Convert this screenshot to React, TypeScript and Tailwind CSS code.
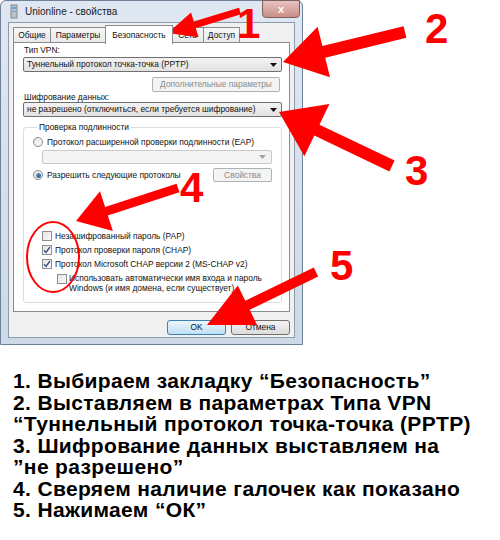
import React from 'react';

const ui = { fontFamily: '"Liberation Sans", Arial, sans-serif' };

type Pt = [number, number];

// builds a filled arrow polygon from the tail to the tip
function arrowPoints(tail: Pt, tip: Pt, headLen: number, headHalf: number, shaftHalf: number) {
  const dx = tail[0] - tip[0];
  const dy = tail[1] - tip[1];
  const len = Math.hypot(dx, dy);
  const ux = dx / len;
  const uy = dy / len;
  const px = -uy;
  const py = ux;
  const bx = tip[0] + ux * headLen;
  const by = tip[1] + uy * headLen;
  const pts: Pt[] = [
    tip,
    [bx + px * headHalf, by + py * headHalf],
    [bx + px * shaftHalf, by + py * shaftHalf],
    [tail[0] + px * shaftHalf, tail[1] + py * shaftHalf],
    [tail[0] - px * shaftHalf, tail[1] - py * shaftHalf],
    [bx - px * shaftHalf, by - py * shaftHalf],
    [bx - px * headHalf, by - py * headHalf],
  ];
  return pts.map((p) => p.map((n) => n.toFixed(1)).join(',')).join(' ');
}

const arrows = [
  { tail: [240, 11] as Pt, tip: [168, 33] as Pt, len: 28, head: 13, shaft: 3.5 },
  { tail: [405, 32] as Pt, tip: [283, 62] as Pt, len: 42, head: 26, shaft: 6 },
  { tail: [392, 166] as Pt, tip: [279, 112] as Pt, len: 42, head: 29, shaft: 6 },
  { tail: [178, 188] as Pt, tip: [76, 221] as Pt, len: 32, head: 21, shaft: 4.5 },
  { tail: [316, 272] as Pt, tip: [207, 325] as Pt, len: 45, head: 22, shaft: 5 },
];

const digits = [
  { t: '1', x: 237, y: 38 },
  { t: '2', x: 425, y: 43 },
  { t: '3', x: 405, y: 185 },
  { t: '4', x: 180, y: 202 },
  { t: '5', x: 330, y: 280 },
];

const steps = [
  '1. Выбираем закладку “Безопасность”',
  '2. Выставляем в параметрах Типа VPN',
  '“Туннельный протокол точка-точка (PPTP)',
  '3. Шифрование данных выставляем на',
  '”не разрешено”',
  '4. Сверяем наличие галочек как показано',
  '5. Нажимаем “ОК”',
];

function Caret({ muted }: { muted?: boolean }) {
  return (
    <svg width="7" height="4" viewBox="0 0 7 4" className="shrink-0">
      <path d="M0 0h7L3.5 4z" fill={muted ? '#a0a0a0' : '#111'} />
    </svg>
  );
}

function Combo({ text }: { text: string }) {
  return (
    <div className="h-[15px] w-[259px] flex items-center justify-between pl-[3px] pr-[4px] rounded-[2px] border border-[#707070] bg-gradient-to-b from-[#f3f3f3] to-[#e2e2e2] text-[8.4px] text-[#111] whitespace-nowrap">
      <span>{text}</span>
      <Caret />
    </div>
  );
}

function Radio({ on }: { on?: boolean }) {
  return (
    <span className="w-[10px] h-[10px] rounded-full border border-[#8a8a8a] bg-gradient-to-br from-[#e6e6e6] to-[#fafafa] flex items-center justify-center shrink-0">
      {on && <span className="w-[5px] h-[5px] rounded-full bg-gradient-to-br from-[#6fa7d6] to-[#1f4f86]" />}
    </span>
  );
}

function Check({ on }: { on?: boolean }) {
  return (
    <span className="w-[10px] h-[10px] border border-[#8f8f8f] bg-gradient-to-br from-[#e4e4e4] to-[#fbfbfb] flex items-center justify-center shrink-0">
      {on && (
        <svg width="8" height="8" viewBox="0 0 8 8">
          <path d="M1 4.2l2 2.2L7 1" fill="none" stroke="#3b4f8a" strokeWidth="1.4" />
        </svg>
      )}
    </span>
  );
}

const tabs = ['Общие', 'Параметры', 'Безопасность', 'Сеть', 'Доступ'];
const tabW = ['w-[38px]', 'w-[56px]', 'w-[68px]', 'w-[33px]', 'w-[37px]'];

export default function App() {
  return (
    <div className="relative w-[500px] h-[540px] bg-white overflow-hidden" style={ui}>
      {/* dialog window */}
      <div className="w-[303px] h-[345px] flex flex-col rounded-t-[6px] border border-[#6f8196] bg-gradient-to-b from-[#dfe8f2] to-[#cdd9e6] px-[7px] pb-[6px] text-[8.4px] whitespace-nowrap">
        <div className="relative h-[21px] flex items-center gap-[6px] pl-[1px]">
          <svg width="10" height="15" viewBox="0 0 10 15">
            <rect x="2" y="1" width="6" height="13" fill="#b9c3cc" stroke="#7f8a94" />
            <rect x="3" y="3" width="4" height="2" fill="#6fa3d2" />
            <rect x="3" y="7" width="4" height="1" fill="#8e99a3" />
          </svg>
          <span className="text-[10px] text-[#1b1b1b]">Unionline - свойства</span>
          <div className="absolute -top-px right-[-5px] w-[38px] h-[18px] rounded-b-[4px] border border-[#7a5f5e] bg-gradient-to-b from-[#e7c3bf] to-[#c98e87] flex items-center justify-center">
            <span className="text-white text-[11px] font-bold leading-none">x</span>
          </div>
        </div>

        <div className="flex-1 flex flex-col bg-[#f0f0f0] border border-[#8d9cad] px-[4px] pt-[2px] text-[#111]">
          {/* tabs */}
          <div className="h-[18px] flex items-end">
            {tabs.map((t, i) =>
              i === 2 ? (
                <div key={t} className={`relative z-10 ${tabW[i]} h-[19px] -mb-px -mx-px bg-white border border-b-0 border-[#898c95] flex items-start pt-[3px] justify-center`}>
                  {t}
                </div>
              ) : (
                <div key={t} className={`${tabW[i]} h-[16px] bg-gradient-to-b from-[#f7f7f7] to-[#e8e8e8] border border-b-0 border-[#898c95] -ml-px first:ml-0 flex items-center justify-center`}>
                  {t}
                </div>
              )
            )}
          </div>

          {/* tab panel */}
          <div className="h-[270px] -mt-px bg-white border border-[#898c95] flex flex-col pl-[9px] pt-px">
            <div className="h-[12px] leading-[12px] pl-px">Тип VPN:</div>
            <div className="mt-px">
              <Combo text="Туннельный протокол точка-точка (PPTP)" />
            </div>
            <div className="mt-[5px] w-[259px] flex justify-end pr-[2px]">
              <div className="h-[15px] w-[128px] rounded-[2px] border border-[#adb2b5] bg-[#f4f4f4] text-[#8a8a8a] flex items-center justify-center">
                Дополнительные параметры
              </div>
            </div>
            <div className="h-[10px] leading-[10px] pl-px">Шифрование данных:</div>
            <Combo text="не разрешено (отключиться, если требуется шифрование)" />

            <fieldset className="mt-[4px] w-[259px] h-[182px] border border-[#d5dfe5] rounded-[3px] px-[9px] flex flex-col">
              <legend className="ml-[4px] px-[2px] h-[12px] leading-[12px]">Проверка подлинности</legend>
              <div className="mt-[3px] h-[12px] flex items-center gap-[4px]">
                <Radio />
                <span>Протокол расширенной проверки подлинности (EAP)</span>
              </div>
              <div className="mt-[2px] ml-[9px] h-[14px] w-[230px] rounded-[2px] border border-[#c9c9c9] bg-[#f4f4f4] flex items-center justify-end pr-[5px]">
                <Caret muted />
              </div>
              <div className="mt-[4px] h-[14px] flex items-center gap-[4px]">
                <Radio on />
                <span>Разрешить следующие протоколы</span>
                <div className="ml-auto h-[14px] w-[59px] rounded-[2px] border border-[#adb2b5] bg-[#f4f4f4] text-[#8a8a8a] flex items-center justify-center">
                  Свойства
                </div>
              </div>

              <div className="mt-[47px] flex flex-col pl-[9px]">
                <div className="h-[14px] flex items-center gap-[3px]">
                  <Check />
                  <span>Незашифрованный пароль (PAP)</span>
                </div>
                <div className="h-[14px] flex items-center gap-[3px]">
                  <Check on />
                  <span>Протокол проверки пароля (CHAP)</span>
                </div>
                <div className="h-[14px] flex items-center gap-[3px]">
                  <Check on />
                  <span>Протокол Microsoft CHAP версии 2 (MS-CHAP v2)</span>
                </div>
                <div className="mt-[2px] pl-[15px] flex items-start gap-[2px]">
                  <div className="mt-[1px]">
                    <Check />
                  </div>
                  <div className="leading-[10px]">
                    Использовать автоматически имя входа и пароль
                    <br />
                    Windows (и имя домена, если существует)
                  </div>
                </div>
              </div>
            </fieldset>
          </div>

          {/* dialog buttons */}
          <div className="mt-[8px] flex justify-end gap-[5px]">
            <div className="h-[15px] w-[59px] rounded-[3px] border border-[#3c7fb1] bg-gradient-to-b from-[#ebf6fd] to-[#bfe0f4] flex items-center justify-center">
              OK
            </div>
            <div className="h-[15px] w-[59px] rounded-[3px] border border-[#707070] bg-gradient-to-b from-[#f3f3f3] to-[#dcdcdc] flex items-center justify-center">
              Отмена
            </div>
          </div>
        </div>
      </div>

      {/* instructions */}
      <div className="mt-[25px] pl-[13px] flex flex-col text-[21px] tracking-[0.35px] leading-[21.5px] font-bold text-black whitespace-nowrap">
        {steps.map((s) => (
          <div key={s}>{s}</div>
        ))}
      </div>

      {/* red annotations drawn over the screenshot */}
      <svg className="absolute inset-0 pointer-events-none" width="500" height="540" viewBox="0 0 500 540">
        {arrows.map((a, i) => (
          <polygon key={i} points={arrowPoints(a.tail, a.tip, a.len, a.head, a.shaft)} fill="#ff0000" />
        ))}
        <ellipse cx="53" cy="257" rx="26" ry="35" fill="none" stroke="#ff0000" strokeWidth="2" />
        {digits.map((d) => (
          <text key={d.t} x={d.x} y={d.y} fill="#ff0000" fontSize="42" fontWeight="700" fontFamily='"Liberation Sans", Arial, sans-serif'>
            {d.t}
          </text>
        ))}
      </svg>
    </div>
  );
}
